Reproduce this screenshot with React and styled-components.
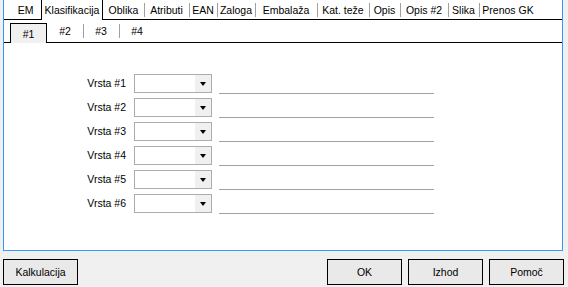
import * as React from "react";
import styled, { createGlobalStyle } from "styled-components";

const GlobalStyle = createGlobalStyle`
  html, body {
    margin: 0;
    padding: 0;
    background: #f0f0f0;
  }
  body {
    font-family: "Liberation Sans", Arial, sans-serif;
    font-size: 10.5px;
    color: #000;
  }
`;

const Window = styled.div`
  width: 568px;
  height: 287px;
  display: flex;
  flex-direction: column;
  background: #f0f0f0;
`;

const Panel = styled.div`
  margin-left: 3px;
  width: 560px;
  height: 251px;
  box-sizing: border-box;
  background: #fff;
  border: 1px solid #3399ff;
  border-top: none;
  display: flex;
  flex-direction: column;
`;

const TabStrip = styled.div`
  display: flex;
  height: ${(p) => p.$height}px;
  flex-shrink: 0;
`;

const Spacer = styled.div`
  width: ${(p) => p.$width}px;
  flex-shrink: 0;
  border-bottom: 1px solid #000;
`;

const Filler = styled.div`
  flex: 1;
  border-bottom: 1px solid #000;
`;

const Tab = styled.div`
  width: ${(p) => p.$width}px;
  flex-shrink: 0;
  box-sizing: border-box;
  display: flex;
  align-items: center;
  justify-content: center;
  white-space: nowrap;
  border-bottom: 1px solid #000;
  background-image: ${(p) =>
    p.$sep ? "linear-gradient(#a0a0a0, #a0a0a0)" : "none"};
  background-size: 1px 14px;
  background-position: left center;
  background-repeat: no-repeat;
`;

const ActiveTab = styled.div`
  width: ${(p) => p.$width}px;
  flex-shrink: 0;
  box-sizing: border-box;
  margin-top: ${(p) => p.$top || 0}px;
  display: flex;
  align-items: center;
  justify-content: center;
  white-space: nowrap;
  border-left: 1px solid #000;
  border-right: 1px solid #000;
  border-top: ${(p) => (p.$top ? "1px solid #000" : "none")};
  background: ${(p) => p.$bg || "#fff"};
`;

const Content = styled.div`
  flex: 1;
  padding: 31px 0 0 42px;
`;

const Form = styled.div`
  display: grid;
  grid-template-columns: 80px 78px 214px;
  grid-auto-rows: 20px;
  column-gap: 8px;
  row-gap: 4px;
  align-items: start;
`;

const Label = styled.div`
  height: 19px;
  line-height: 19px;
  text-align: right;
  white-space: nowrap;
`;

const Combo = styled.div`
  height: 19px;
  box-sizing: border-box;
  border: 1px solid #acacac;
  background: #fff;
  display: flex;
  justify-content: flex-end;
`;

const ComboButton = styled.div`
  width: 16px;
  background: #f0f0f0;
  display: flex;
  align-items: center;
  justify-content: center;
`;

const Arrow = styled.div`
  width: 0;
  height: 0;
  border-left: 3.5px solid transparent;
  border-right: 3.5px solid transparent;
  border-top: 4px solid #000;
`;

const TextLine = styled.div`
  height: 20px;
  box-sizing: border-box;
  margin-left: -1px;
  border-bottom: 1px solid #a0a0a0;
`;

const ButtonBar = styled.div`
  display: flex;
  padding: 8px 4px 0 3px;
  gap: 6px;
`;

const Button = styled.button`
  width: 75px;
  height: 26px;
  box-sizing: border-box;
  border: 1px solid #000;
  background: #e9e9e9;
  font-family: "Liberation Sans", Arial, sans-serif;
  font-size: 10.5px;
  color: #000;
  padding: 0;
  margin-left: ${(p) => (p.$push ? "auto" : "0")};
`;

const topTabs = [
  { label: "Oblika", width: 41 },
  { label: "Atributi", width: 45, sep: true },
  { label: "EAN", width: 28, sep: true },
  { label: "Zaloga", width: 38, sep: true },
  { label: "Embalaža", width: 62, sep: true },
  { label: "Kat. teže", width: 52, sep: true },
  { label: "Opis", width: 31, sep: true },
  { label: "Opis #2", width: 48, sep: true },
  { label: "Slika", width: 31, sep: true },
  { label: "Prenos GK", width: 58, sep: true },
];

const subTabs = [
  { label: "#2", width: 36 },
  { label: "#3", width: 36, sep: true },
  { label: "#4", width: 36, sep: true },
];

export default function App() {
  const rows = [1, 2, 3, 4, 5, 6];
  return (
    <Window>
      <GlobalStyle />
      <Panel>
        <TabStrip $height={20}>
          <Spacer $width={6} />
          <Tab $width={31}>EM</Tab>
          <ActiveTab $width={62}>Klasifikacija</ActiveTab>
          {topTabs.map((t) => (
            <Tab key={t.label} $width={t.width} $sep={t.sep}>
              {t.label}
            </Tab>
          ))}
          <Filler />
        </TabStrip>
        <TabStrip $height={23}>
          <Spacer $width={6} />
          <ActiveTab $width={37} $top={3} $bg="#f0f0f0">
            #1
          </ActiveTab>
          {subTabs.map((t) => (
            <Tab key={t.label} $width={t.width} $sep={t.sep}>
              {t.label}
            </Tab>
          ))}
          <Filler />
        </TabStrip>
        <Content>
          <Form>
            {rows.map((n) => (
              <React.Fragment key={n}>
                <Label>Vrsta #{n}</Label>
                <Combo>
                  <ComboButton>
                    <Arrow />
                  </ComboButton>
                </Combo>
                <TextLine />
              </React.Fragment>
            ))}
          </Form>
        </Content>
      </Panel>
      <ButtonBar>
        <Button>Kalkulacija</Button>
        <Button $push>OK</Button>
        <Button>Izhod</Button>
        <Button>Pomoč</Button>
      </ButtonBar>
    </Window>
  );
}
